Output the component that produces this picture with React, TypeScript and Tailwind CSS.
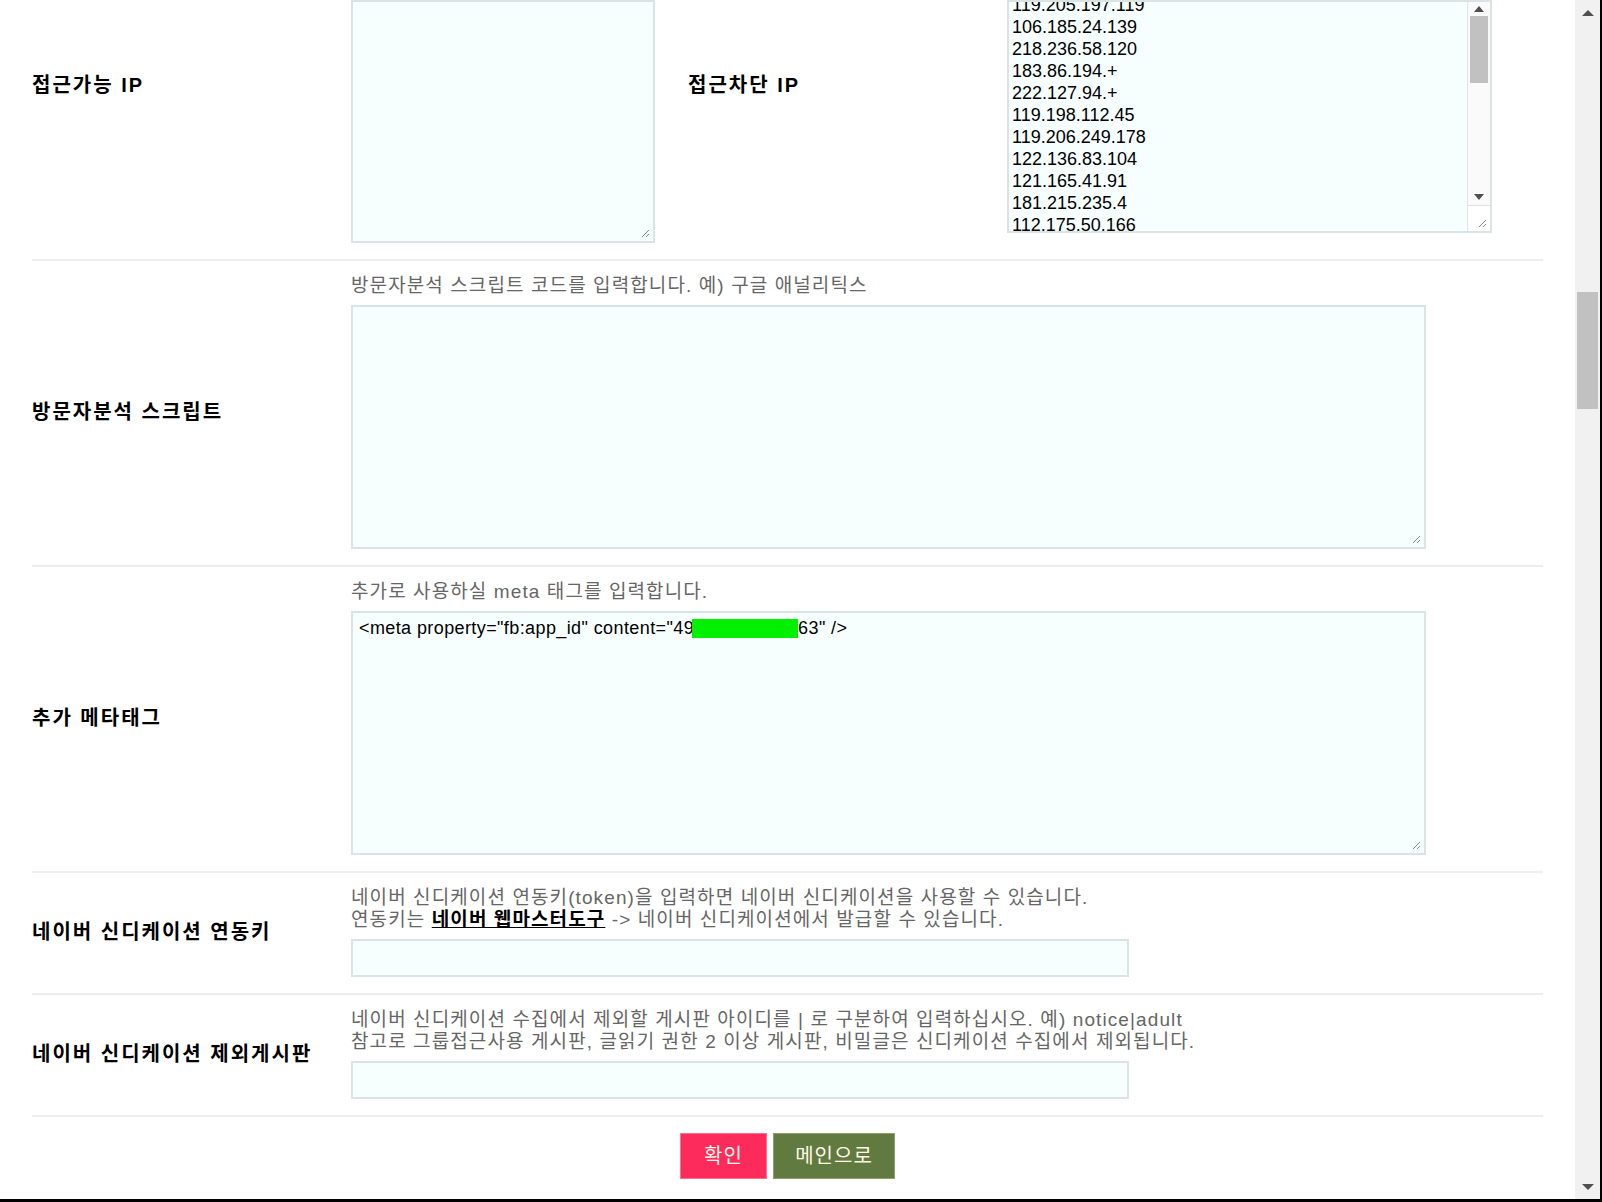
const blockedIps = [
  '119.205.197.119',
  '106.185.24.139',
  '218.236.58.120',
  '183.86.194.+',
  '222.127.94.+',
  '119.198.112.45',
  '119.206.249.178',
  '122.136.83.104',
  '121.165.41.91',
  '181.215.235.4',
  '112.175.50.166',
]

const font = "font-['Liberation_Sans','Noto_Sans_CJK_KR',sans-serif]"

function Grip() {
  return (
    <svg width="10" height="10" viewBox="0 0 10 10" className="absolute bottom-[3px] right-[3px]">
      <line x1="9" y1="2" x2="2" y2="9" stroke="#888" strokeWidth="1" />
      <line x1="9" y1="6" x2="6" y2="9" stroke="#888" strokeWidth="1" />
    </svg>
  )
}

function Box({ className, children }: { className: string; children?: React.ReactNode }) {
  return (
    <div className={`relative border-2 border-[#dbe4e4] bg-[#f6fefe] ${className}`}>
      {children}
      <Grip />
    </div>
  )
}

function Label({ children }: { children: React.ReactNode }) {
  return <div className="text-[20px] leading-[24px] font-bold tracking-[2px] text-black">{children}</div>
}

function Hint({ children }: { children: React.ReactNode }) {
  return <p className="text-[19px] leading-[22px] tracking-[1.1px] text-[#666]">{children}</p>
}

function Row({ label, children }: { label: string; children: React.ReactNode }) {
  return (
    <div className="grid grid-cols-[319px_1fr] items-center border-b-2 border-[#eeeeee] pt-[14px] pb-[16px]">
      <Label>{label}</Label>
      <div className="flex flex-col gap-2">{children}</div>
    </div>
  )
}

function Arrow({ up, small }: { up?: boolean; small?: boolean }) {
  const s = small ? 'border-x-[5px] ' : 'border-x-[6px] '
  return up ? (
    <span className={`${s} border-x-transparent border-b-[6px] border-b-[#505050]`} />
  ) : (
    <span className={`${s} border-x-transparent border-t-[6px] border-t-[#505050]`} />
  )
}

function IpList() {
  return (
    <div className="flex h-[233px] border-2 border-[#dbe4e4] bg-[#f6fefe]">
      <div className="flex-1 overflow-hidden pl-[3px]">
        <div className="-mt-[8px] text-[18px] leading-[22px] text-black">
          {blockedIps.map((ip) => (
            <div key={ip}>{ip}</div>
          ))}
        </div>
      </div>
      <div className="flex w-[23px] flex-col border-l border-[#e4e4e4] bg-[#fafafa]">
        <div className="flex h-[14px] items-center justify-center">
          <Arrow up small />
        </div>
        <div className="mx-[2px] h-[67px] bg-[#c1c1c1]" />
        <div className="flex-1" />
        <div className="flex h-[16px] items-center justify-center">
          <Arrow small />
        </div>
        <div className="relative h-[26px] border-t border-[#e0e0e0] bg-white">
          <Grip />
        </div>
      </div>
    </div>
  )
}

export default function App() {
  return (
    <div className={`flex h-[1202px] w-[1602px] flex-col overflow-hidden bg-white ${font}`}>
      <div className="flex flex-1 overflow-hidden">
        <main className="flex-1 px-[32px]">
          <div className="grid h-[261px] grid-cols-[319px_337px_319px_1fr] items-start border-b-2 border-[#eeeeee]">
            <div className="pt-[73px]">
              <Label>접근가능 IP</Label>
            </div>
            <Box className="h-[243px] w-[304px]" />
            <div className="pt-[73px]">
              <Label>접근차단 IP</Label>
            </div>
            <div className="w-[485px]">
              <IpList />
            </div>
          </div>

          <Row label="방문자분석 스크립트">
            <Hint>방문자분석 스크립트 코드를 입력합니다. 예) 구글 애널리틱스</Hint>
            <Box className="h-[244px] w-[1075px]" />
          </Row>

          <Row label="추가 메타태그">
            <Hint>추가로 사용하실 meta 태그를 입력합니다.</Hint>
            <Box className="h-[244px] w-[1075px] px-[6px] pt-[4px]">
              <div className="flex items-center text-[18px] leading-[22px] tracking-[0.4px] text-black">
                <span>{'<meta property="fb:app_id" content="49'}</span>
                <span className="-ml-[2px] inline-block h-[19px] w-[106px] bg-[#00f000]" />
                <span>{'63" />'}</span>
              </div>
            </Box>
          </Row>

          <Row label="네이버 신디케이션 연동키">
            <div>
              <Hint>네이버 신디케이션 연동키(token)을 입력하면 네이버 신디케이션을 사용할 수 있습니다.</Hint>
              <Hint>
                연동키는{' '}
                <a href="#" className="font-bold text-black underline">
                  네이버 웹마스터도구
                </a>{' '}
                -&gt; 네이버 신디케이션에서 발급할 수 있습니다.
              </Hint>
            </div>
            <div className="h-[38px] w-[778px] border-2 border-[#dbe4e4] bg-[#f6fefe]" />
          </Row>

          <Row label="네이버 신디케이션 제외게시판">
            <div>
              <Hint>네이버 신디케이션 수집에서 제외할 게시판 아이디를 | 로 구분하여 입력하십시오. 예) notice|adult</Hint>
              <Hint>참고로 그룹접근사용 게시판, 글읽기 권한 2 이상 게시판, 비밀글은 신디케이션 수집에서 제외됩니다.</Hint>
            </div>
            <div className="h-[38px] w-[778px] border-2 border-[#dbe4e4] bg-[#f6fefe]" />
          </Row>

          <div className="mt-[16px] flex justify-center gap-[6px]">
            <button className="h-[46px] w-[87px] border border-[#ff6f8e] bg-[#fd2b5c] text-[20px] tracking-[1px] text-[#fff8e8]">
              확인
            </button>
            <button className="h-[46px] w-[122px] border border-[#8ea06e] bg-[#617a40] text-[20px] tracking-[1px] text-[#fff8e8]">
              메인으로
            </button>
          </div>
        </main>

        <div className="flex w-[25px] flex-col bg-[#f1f1f1]">
          <div className="flex h-[25px] items-center justify-center">
            <Arrow up />
          </div>
          <div className="flex-1 pt-[267px]">
            <div className="mx-[2px] h-[117px] bg-[#c1c1c1]" />
          </div>
          <div className="flex h-[25px] items-center justify-center">
            <Arrow />
          </div>
        </div>
        <div className="w-[2px] bg-black" />
      </div>
      <div className="h-[3px] bg-black" />
    </div>
  )
}
